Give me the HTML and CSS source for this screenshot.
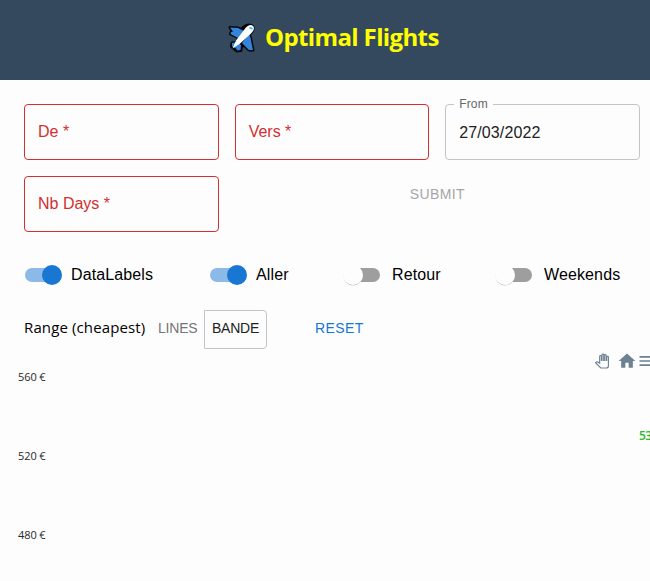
FILE: index.html
```html
<!DOCTYPE html>
<html lang="fr">
<head>
<meta charset="utf-8">
<title>Optimal Flights</title>
<link rel="stylesheet" href="styles.css">
</head>
<body>
<header class="header">
  <svg class="plane" viewBox="0 0 30 30" width="30" height="30">
    <path class="plane-outline" d="M3 4.500l8 .5 3 1.500c4-4 6-4.500 8-4.500 3 0 5 2 4 4.500-.7 2-2 3.500-4 5.500l1.500 2.500.5 3 2 9.500h-4l-5-5-3 2v3.500l-4 .5-2.500-2L4.500 23.500l.5-3.500 4-.5 3-4.500-8.500-4 .5-2 2-.5z"/>
    <path class="plane-wing" d="M3 4.500l8 .5 6 3-5 7.500-8.500-4.500.5-2 2-.5z"/>
    <path class="plane-wing" d="M22 11l1.500 3.500.5 3 2 9.500h-4l-7-7z"/>
    <path class="plane-wing" d="M5 20l5-1 4 3-.5 5-3 .5-2-2.500-3.500-1.500z"/>
    <path class="plane-body" d="M5.500 25.500l3.500-8L18.500 5c2.500-2.500 5.500-4 7.500-2s.5 5-2 7.500L12.500 21z"/>
    <path class="plane-window" d="M22.500 4.500l3 1.500"/>
  </svg>
  <h1 class="title">Optimal Flights</h1>
</header>
<main>
  <form class="form">
    <div class="field invalid"><span class="value">De *</span></div>
    <div class="field invalid"><span class="value">Vers *</span></div>
    <div class="field"><span class="label">From</span><span class="value date">27/03/2022</span></div>
    <div class="field invalid"><span class="value">Nb Days *</span></div>
    <div class="submit-cell"><button class="submit" type="button" disabled>SUBMIT</button></div>
  </form>
  <div class="switches">
    <div class="option"><span class="switch on"></span><span class="wide">DataLabels</span></div>
    <div class="option"><span class="switch on"></span><span class="wide">Aller</span></div>
    <div class="option"><span class="switch"></span><span class="wide">Retour</span></div>
    <div class="option"><span class="switch"></span><span class="wide">Weekends</span></div>
  </div>
  <div class="range">
    <span class="range-title">Range (cheapest)</span>
    <button class="lines" type="button">LINES</button>
    <button class="bande" type="button">BANDE</button>
    <button class="reset" type="button">RESET</button>
  </div>
  <section class="chart">
    <div class="toolbar">
      <svg class="hand" viewBox="0 0 24 24" width="14" height="14"><path class="palm" d="M23 5.500V20c0 2.200-1.800 4-4 4h-7.300c-1.080 0-2.100-.43-2.850-1.190L1 14.830s1.260-1.230 1.300-1.250c.22-.19.490-.29.790-.29.220 0 .42.060.6.160.04.010 4.310 2.460 4.310 2.460V4c0-.83.670-1.500 1.500-1.500S11 3.170 11 4v7h1V1.500c0-.83.670-1.500 1.500-1.500S15 .67 15 1.500V11h1V2.500c0-.83.670-1.500 1.500-1.500s1.500.67 1.500 1.500V11h1V5.500c0-.83.670-1.500 1.500-1.500s1.500.67 1.500 1.500z"/></svg>
      <svg class="home" viewBox="0 0 24 24" width="20" height="20"><path d="M10 20v-6h4v6h5v-8h3L12 3 2 12h3v8z"/></svg>
      <svg class="menu" viewBox="0 0 24 24" width="20" height="20"><path d="M3 18h18v-2H3v2zm0-5h18v-2H3v2zm0-7v2h18V6H3z"/></svg>
    </div>
    <div class="axis"><span>560 €</span><span>520 €</span><span>480 €</span></div>
    <span class="data-label">53</span>
  </section>
</main>
</body>
</html>
```
FILE: styles.css
```css
* { box-sizing: border-box; }
body {
  margin: 0;
  height: 581px;
  overflow: hidden;
  background: #fdfdfd;
  color: #000;
  font: 16px/24px "Liberation Sans", Arial, sans-serif;
}
button { padding: 0; border: 0; background: none; font: inherit; white-space: nowrap; }
.header {
  display: flex;
  height: 80px;
  padding: 23px 0 0 227px;
  background: #34495e;
}
.plane { flex: none; }
.plane-outline { fill: #050709; stroke: #050709; stroke-width: 3; stroke-linejoin: round; }
.plane-wing { fill: #3584da; }
.plane-body { fill: #fff; }
.plane-window { stroke: #2cb5e8; stroke-width: 1.5; }
.title {
  margin: -2px 0 0 8px;
  color: #ff0;
  font: bold 24px/32px "Open Sans", "Noto Sans", sans-serif;
  letter-spacing: -.63px;
  white-space: nowrap;
}
.form {
  display: grid;
  grid-template-columns: repeat(3, 1fr);
  gap: 16px;
  padding: 24px 10px 0 24px;
}
.field {
  position: relative;
  height: 56px;
  padding: 15px 13px;
  border: 1px solid #c4c4c4;
  border-radius: 4px;
}
.invalid { border-color: #d32f2f; color: #d32f2f; }
.label {
  position: absolute;
  top: -13px;
  left: 8px;
  padding: 0 5px;
  background: #fdfdfd;
  color: #666;
  font-size: 12px;
  letter-spacing: .1px;
}
.date { position: relative; top: 1px; color: #212121; letter-spacing: .1px; }
.submit-cell { grid-column: 2 / 4; display: flex; justify-content: center; padding-top: 6px; height: 30px; }
.submit { color: #a6a6a6; font-size: 14px; letter-spacing: .4px; }
.switches { display: flex; height: 38px; margin-top: 24px; padding-left: 25px; }
.option { display: flex; flex: none; align-items: center; gap: 9px; width: 185px; white-space: nowrap; }
.option:nth-child(2) { width: 136px; }
.option:nth-child(3) { width: 152px; }
.option:nth-child(4) { width: 140px; }
.wide { letter-spacing: .12px; }
.switch { position: relative; flex: none; width: 37px; height: 20px; }
.switch::before {
  content: "";
  display: block;
  width: 34px;
  height: 14px;
  margin-top: 3px;
  border-radius: 7px;
  background: #9e9e9e;
}
.switch::after {
  content: "";
  position: absolute;
  top: 0;
  left: -3px;
  width: 20px;
  height: 20px;
  border-radius: 50%;
  background: #fdfdfd;
  box-shadow: 0 1px 0 -.5px #bbb;
}
.on::before { background: #8bb9e8; }
.on::after { left: 17px; background: #1976d2; box-shadow: none; }
.range { display: flex; align-items: center; height: 39px; margin-top: 16px; padding-left: 24px; }
.range button { padding-bottom: 3px; }
.range-title { width: 122px; margin: 0 12px 5px 0; font-family: "Open Sans", "Noto Sans", sans-serif; font-size: 15px; letter-spacing: .12px; white-space: nowrap; }
.lines { width: 46px; color: #757575; font-size: 14px; letter-spacing: -.2px; text-align: left; }
.bande { width: 63px; height: 39px; border: 1px solid #c4c4c4; border-radius: 0 4px 4px 0; color: #212121; font-size: 14px; letter-spacing: -.2px; }
.reset { margin-left: 48px; color: #1976d2; font-size: 14px; letter-spacing: .4px; }
.chart { position: relative; height: 232px; overflow: hidden; font-family: "Open Sans", "Noto Sans", sans-serif; }
.toolbar { display: flex; height: 21px; padding: 1px 0 0 595px; fill: #6e8192; }
.toolbar svg { flex: none; }
.hand { overflow: visible; margin-top: 4px; }
.palm { fill: #fff; stroke: #6e8192; stroke-width: 2; }
.home { margin: 1px 0 0 7.5px; }
.menu { margin-top: 1px; }
.axis { display: grid; grid-template-rows: repeat(3, 79px); padding-left: 18px; color: #25292b; font-size: 11px; line-height: 14px; letter-spacing: -.1px; }
.data-label { position: absolute; top: 79px; left: 639px; color: #2eb82e; font-size: 12px; line-height: 16px; font-weight: 600; letter-spacing: -.5px; white-space: nowrap; }
```
